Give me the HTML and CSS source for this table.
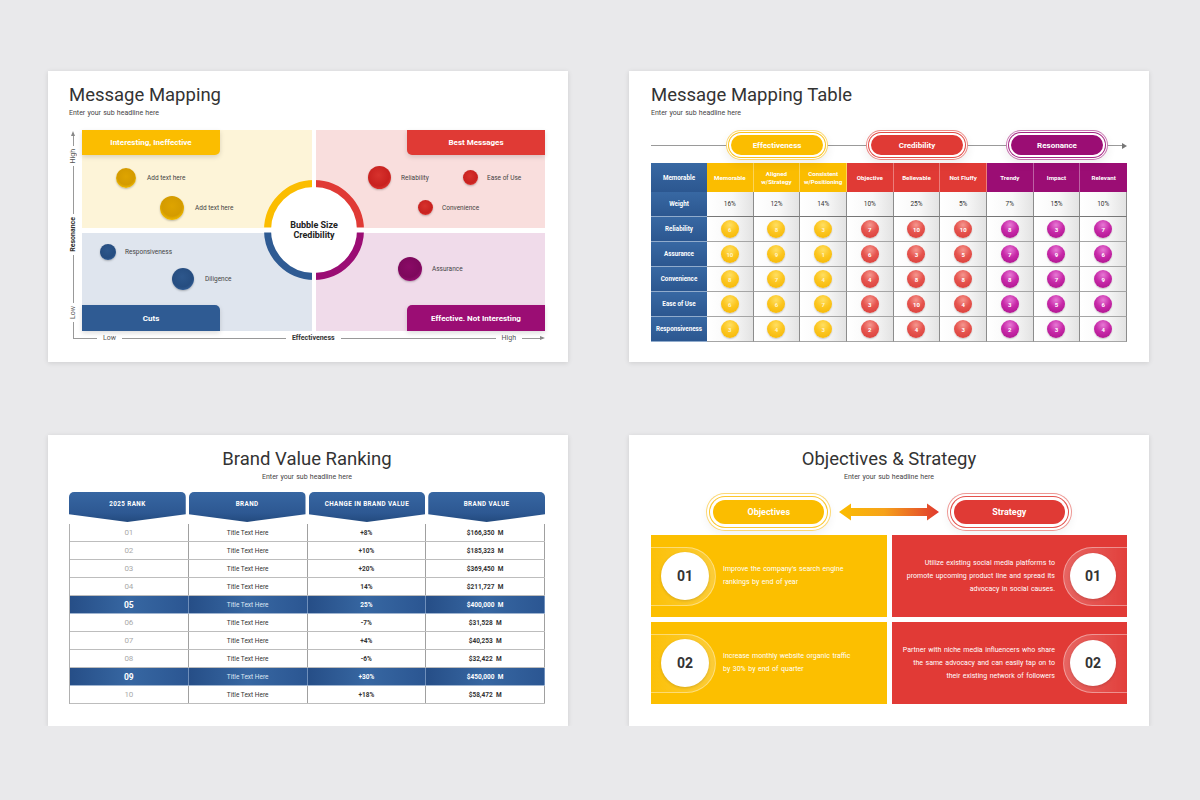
FILE: index.html
```html
<!DOCTYPE html>
<html lang="en">
<head>
<meta charset="utf-8">
<title>Message Mapping Slides</title>
<link rel="stylesheet" href="styles.css">
</head>
<body>
<div class="board">

  <!-- Slide 1 -->
  <section class="slide s-map">
    <h1 class="title">Message Mapping</h1>
    <p class="sub">Enter your sub headline here</p>
    <div class="map">
      <div class="vaxis">
        <span class="arrow-up"></span>
        <span class="vline v1"></span>
        <span class="vlabel">High</span>
        <span class="vline grow"></span>
        <span class="vlabel strong">Resonance</span>
        <span class="vline grow"></span>
        <span class="vlabel">Low</span>
        <span class="vline v2"></span>
      </div>
      <div class="quads">
        <div class="quad q-tl">
          <div class="tab">Interesting, Ineffective</div>
          <div class="node n-tl1"><i class="bub b-yellow d20"></i><span class="g11">Add text here</span></div>
          <div class="node n-tl2"><i class="bub b-yellow d24"></i><span class="g11">Add text here</span></div>
        </div>
        <div class="quad q-tr">
          <div class="tab">Best Messages</div>
          <div class="node n-tr1"><i class="bub b-red d23"></i><span class="g10">Reliability</span></div>
          <div class="node n-tr2"><i class="bub b-red d15"></i><span class="g9">Ease of Use</span></div>
          <div class="node n-tr3"><i class="bub b-red d15"></i><span class="g9">Convenience</span></div>
        </div>
        <div class="quad q-bl">
          <div class="node n-bl1"><i class="bub b-blue d16"></i><span class="g9">Responsiveness</span></div>
          <div class="node n-bl2"><i class="bub b-blue d22"></i><span class="g11">Diligence</span></div>
          <div class="tab">Cuts</div>
        </div>
        <div class="quad q-br">
          <div class="node n-br1"><i class="bub b-purple d24"></i><span class="g10">Assurance</span></div>
          <div class="tab">Effective. Not Interesting</div>
        </div>
        <div class="hub">
          <svg class="hub-ring" width="100" height="100" viewBox="0 0 100 100">
            <circle cx="50" cy="50" r="46.5" fill="#fff"/>
            <path d="M3.5 50 A46.5 46.5 0 0 1 50 3.5" fill="none" stroke="#fbbd00" stroke-width="7"/>
            <path d="M50 3.5 A46.5 46.5 0 0 1 96.5 50" fill="none" stroke="#e03a35" stroke-width="7"/>
            <path d="M96.5 50 A46.5 46.5 0 0 1 50 96.5" fill="none" stroke="#9b0d74" stroke-width="7"/>
            <path d="M50 96.5 A46.5 46.5 0 0 1 3.5 50" fill="none" stroke="#2f5b93" stroke-width="7"/>
            <rect x="48" y="0" width="4" height="100" fill="#fff"/>
            <rect x="0" y="47.5" width="100" height="5" fill="#fff"/>
          </svg>
          <span class="hub-text">Bubble Size<br>Credibility</span>
        </div>
      </div>
      <div class="haxis">
        <span class="hline h1"></span>
        <span class="hlabel">Low</span>
        <span class="hline hg1"></span>
        <span class="hlabel strong">Effectiveness</span>
        <span class="hline hg2"></span>
        <span class="hlabel">High</span>
        <span class="hline h2"></span>
        <span class="arrow-right"></span>
      </div>
    </div>
  </section>

  <!-- Slide 2 -->
  <section class="slide s-table">
    <h1 class="title">Message Mapping Table</h1>
    <p class="sub">Enter your sub headline here</p>
    <div class="pillrow">
      <span class="pill pill-y">Effectiveness</span>
      <span class="pill pill-r">Credibility</span>
      <span class="pill pill-p">Resonance</span>
    </div>
    <div class="mtable">
      <div class="rl hrow">Memorable</div>
      <div class="h hy">Memorable</div>
      <div class="h hy">Aligned<br>w/Strategy</div>
      <div class="h hy">Consistent<br>w/Positioning</div>
      <div class="h hr">Objective</div>
      <div class="h hr">Believable</div>
      <div class="h hr">Not Fluffy</div>
      <div class="h hp">Trendy</div>
      <div class="h hp">Impact</div>
      <div class="h hp last">Relevant</div>

      <div class="rl">Weight</div>
      <div class="c w">16%</div><div class="c w">12%</div><div class="c w">14%</div>
      <div class="c w">10%</div><div class="c w">25%</div><div class="c w">5%</div>
      <div class="c w">7%</div><div class="c w">15%</div><div class="c w">10%</div>

      <div class="rl">Reliability</div>
      <div class="c"><span class="dot dy">6</span></div><div class="c"><span class="dot dy">8</span></div><div class="c"><span class="dot dy">3</span></div>
      <div class="c"><span class="dot dr">7</span></div><div class="c"><span class="dot dr">10</span></div><div class="c"><span class="dot dr">10</span></div>
      <div class="c"><span class="dot dp">8</span></div><div class="c"><span class="dot dp">3</span></div><div class="c"><span class="dot dp">7</span></div>

      <div class="rl">Assurance</div>
      <div class="c"><span class="dot dy">10</span></div><div class="c"><span class="dot dy">9</span></div><div class="c"><span class="dot dy">1</span></div>
      <div class="c"><span class="dot dr">6</span></div><div class="c"><span class="dot dr">3</span></div><div class="c"><span class="dot dr">5</span></div>
      <div class="c"><span class="dot dp">7</span></div><div class="c"><span class="dot dp">9</span></div><div class="c"><span class="dot dp">6</span></div>

      <div class="rl">Convenience</div>
      <div class="c"><span class="dot dy">8</span></div><div class="c"><span class="dot dy">7</span></div><div class="c"><span class="dot dy">4</span></div>
      <div class="c"><span class="dot dr">4</span></div><div class="c"><span class="dot dr">8</span></div><div class="c"><span class="dot dr">8</span></div>
      <div class="c"><span class="dot dp">8</span></div><div class="c"><span class="dot dp">7</span></div><div class="c"><span class="dot dp">9</span></div>

      <div class="rl">Ease of Use</div>
      <div class="c"><span class="dot dy">6</span></div><div class="c"><span class="dot dy">6</span></div><div class="c"><span class="dot dy">7</span></div>
      <div class="c"><span class="dot dr">3</span></div><div class="c"><span class="dot dr">10</span></div><div class="c"><span class="dot dr">4</span></div>
      <div class="c"><span class="dot dp">3</span></div><div class="c"><span class="dot dp">5</span></div><div class="c"><span class="dot dp">6</span></div>

      <div class="rl">Responsiveness</div>
      <div class="c"><span class="dot dy">3</span></div><div class="c"><span class="dot dy">4</span></div><div class="c"><span class="dot dy">3</span></div>
      <div class="c"><span class="dot dr">2</span></div><div class="c"><span class="dot dr">4</span></div><div class="c"><span class="dot dr">3</span></div>
      <div class="c"><span class="dot dp">2</span></div><div class="c"><span class="dot dp">3</span></div><div class="c"><span class="dot dp">4</span></div>
    </div>
  </section>

  <!-- Slide 3 -->
  <section class="slide s-rank">
    <h1 class="title center">Brand Value Ranking</h1>
    <p class="sub center">Enter your sub headline here</p>
    <div class="rtabs">
      <div class="rtab">2025 RANK</div>
      <div class="rtab">BRAND</div>
      <div class="rtab">CHANGE IN BRAND VALUE</div>
      <div class="rtab">BRAND VALUE</div>
    </div>
    <div class="rtable">
      <div class="rrow"><span class="rk">01</span><span class="bt">Title Text Here</span><span class="bv">+8%</span><span class="bv">$166,350&nbsp; M</span></div>
      <div class="rrow"><span class="rk">02</span><span class="bt">Title Text Here</span><span class="bv">+10%</span><span class="bv">$185,323&nbsp; M</span></div>
      <div class="rrow"><span class="rk">03</span><span class="bt">Title Text Here</span><span class="bv">+20%</span><span class="bv">$369,450&nbsp; M</span></div>
      <div class="rrow"><span class="rk">04</span><span class="bt">Title Text Here</span><span class="bv">14%</span><span class="bv">$211,727&nbsp; M</span></div>
      <div class="rrow hl"><span class="rk">05</span><span class="bt">Title Text Here</span><span class="bv">25%</span><span class="bv">$400,000&nbsp; M</span></div>
      <div class="rrow"><span class="rk">06</span><span class="bt">Title Text Here</span><span class="bv">-7%</span><span class="bv">$31,528&nbsp; M</span></div>
      <div class="rrow"><span class="rk">07</span><span class="bt">Title Text Here</span><span class="bv">+4%</span><span class="bv">$40,253&nbsp; M</span></div>
      <div class="rrow"><span class="rk">08</span><span class="bt">Title Text Here</span><span class="bv">-6%</span><span class="bv">$32,422&nbsp; M</span></div>
      <div class="rrow hl"><span class="rk">09</span><span class="bt">Title Text Here</span><span class="bv">+30%</span><span class="bv">$450,000&nbsp; M</span></div>
      <div class="rrow"><span class="rk">10</span><span class="bt">Title Text Here</span><span class="bv">+18%</span><span class="bv">$58,472&nbsp; M</span></div>
    </div>
  </section>

  <!-- Slide 4 -->
  <section class="slide s-obj">
    <h1 class="title center">Objectives &amp; Strategy</h1>
    <p class="sub center">Enter your sub headline here</p>
    <div class="opills">
      <span class="opill op-y">Objectives</span>
      <svg class="darrow" width="100" height="20" viewBox="0 0 100 20">
        <defs>
          <linearGradient id="ag" x1="0" y1="0" x2="1" y2="0">
            <stop offset="0" stop-color="#fbbd00"/>
            <stop offset="0.45" stop-color="#f6a21a"/>
            <stop offset="1" stop-color="#e0392f"/>
          </linearGradient>
        </defs>
        <polygon points="0,10 12,1.5 12,6 88,6 88,1.5 100,10 88,18.5 88,14 12,14 12,18.5" fill="url(#ag)"/>
      </svg>
      <span class="opill op-r">Strategy</span>
    </div>
    <div class="cards">
      <div class="card card-y">
        <div class="band"><span class="num">01</span></div>
        <p class="ctext">Improve the company's search engine<br>rankings by end of year</p>
      </div>
      <div class="card card-r">
        <div class="band"><span class="num">01</span></div>
        <p class="ctext">Utilize existing social media platforms to<br>promote upcoming product line and spread its<br>advocacy in social causes.</p>
      </div>
      <div class="card card-y">
        <div class="band"><span class="num">02</span></div>
        <p class="ctext">Increase monthly website organic traffic<br>by 30% by end of quarter</p>
      </div>
      <div class="card card-r">
        <div class="band"><span class="num">02</span></div>
        <p class="ctext">Partner with niche media influencers who share<br>the same advocacy and can easily tap on to<br>their existing network of followers</p>
      </div>
    </div>
  </section>

</div>
</body>
</html>
```

FILE: styles.css
```css
* { box-sizing: border-box; }

body {
  margin: 0;
  background: #e9e9eb;
  font-family: Roboto, "Liberation Sans", Arial, sans-serif;
  color: #333;
}

.board {
  display: grid;
  grid-template-columns: 520px 520px;
  grid-template-rows: 291px 291px;
  column-gap: 61px;
  row-gap: 73px;
  padding: 71px 0 0 48px;
}

.slide {
  background: #fff;
  box-shadow: 0 1px 5px rgba(0, 0, 0, 0.12);
  padding: 13px 22px 0 22px;
  overflow: hidden;
}

.title {
  margin: 0;
  font-size: 18.5px;
  font-weight: 400;
  line-height: 22px;
  color: #333;
}

.sub {
  margin: 2px 0 0;
  font-size: 7px;
  line-height: 10px;
  color: #444;
  word-spacing: 0.5px;
}

.center { text-align: center; }

/* ---------- Slide 1 ---------- */
.s-map { padding: 13px 23px 0 21px; }

.map {
  margin: 12px 0 0 -1px;
  display: grid;
  grid-template-columns: 10px 463px;
  grid-template-rows: 201px 14px;
  column-gap: 4px;
}

.vaxis {
  grid-column: 1;
  grid-row: 1 / 3;
  margin: 1px 0 7px;
  display: flex;
  flex-direction: column;
  align-items: center;
}

.arrow-up {
  width: 0;
  height: 0;
  border-left: 2.5px solid transparent;
  border-right: 2.5px solid transparent;
  border-bottom: 5px solid #888;
  flex: none;
}

.vline { width: 1px; background: #999; flex: none; }
.vline.v1 { height: 10px; }
.vline.v2 { height: 16px; }
.vline.grow { flex: 1 1 0; }

.vlabel {
  writing-mode: vertical-rl;
  transform: rotate(180deg);
  font-size: 7px;
  line-height: 10px;
  color: #555;
  padding: 3px 0;
  flex: none;
}

.strong { font-weight: 700; color: #333; }

.haxis {
  grid-column: 1 / 3;
  grid-row: 2;
  margin-left: 5px;
  display: flex;
  align-items: center;
}

.hline { height: 1px; background: #999; flex: none; }
.hline.h1 { width: 24px; }
.hline.h2 { width: 18px; }
.hline.hg1 { flex: 164 1 0; }
.hline.hg2 { flex: 155 1 0; }

.hlabel {
  font-size: 7px;
  line-height: 10px;
  color: #555;
  padding: 0 6px;
  flex: none;
}
.hlabel.strong { color: #333; }

.arrow-right {
  width: 0;
  height: 0;
  border-top: 2.5px solid transparent;
  border-bottom: 2.5px solid transparent;
  border-left: 5px solid #888;
  flex: none;
}

.quads {
  grid-column: 2;
  grid-row: 1;
  position: relative;
  display: grid;
  grid-template-columns: 230px 229px;
  grid-template-rows: 98px 98px;
  gap: 5px 4px;
}

.quad {
  position: relative;
  display: flex;
  flex-direction: column;
}
.q-tl { background: #fdf4d8; align-items: flex-start; }
.q-tr { background: #f9dedd; align-items: flex-end; }
.q-bl { background: #dfe5ee; align-items: flex-start; justify-content: flex-end; }
.q-br { background: #f0dbea; align-items: flex-end; justify-content: flex-end; }

.tab {
  width: 138px;
  height: 25px;
  display: flex;
  align-items: center;
  justify-content: center;
  color: #fff;
  font-weight: 700;
  font-size: 8px;
  box-shadow: 0 2px 5px rgba(0, 0, 0, 0.14);
}
.q-tl .tab { background: #fbbd00; border-radius: 0 0 5px 0; }
.q-tr .tab { background: #e03a35; border-radius: 0 0 0 5px; }
.q-bl .tab { background: #2f5b93; border-radius: 0 5px 0 0; height: 26px; }
.q-br .tab { background: #9b0d74; border-radius: 5px 0 0 0; height: 26px; }

.node {
  position: absolute;
  display: flex;
  align-items: center;
  font-size: 6.5px;
  color: #444;
  white-space: nowrap;
}

.bub {
  flex: none;
  border-radius: 50%;
  box-shadow: 0 1px 2px rgba(0, 0, 0, 0.25);
}
.d15 { width: 15px; height: 15px; }
.d16 { width: 16px; height: 16px; }
.d20 { width: 20px; height: 20px; }
.d22 { width: 22px; height: 22px; }
.d23 { width: 23px; height: 23px; }
.d24 { width: 24px; height: 24px; }

.g9 { margin-left: 9px; }
.g10 { margin-left: 10px; }
.g11 { margin-left: 11px; }

.b-yellow { background: radial-gradient(circle at 50% 42%, #dea400 0%, #d49b00 55%, #f2bd00 78%, #f7c81e 100%); }
.b-red { background: radial-gradient(circle at 46% 40%, #d7322d 0%, #c8211f 58%, #df3b36 82%, #e4504a 100%); }
.b-blue { background: radial-gradient(circle at 46% 40%, #2d578c 0%, #264d80 58%, #35619a 82%, #3f6ba4 100%); }
.b-purple { background: radial-gradient(circle at 46% 40%, #8a0a66 0%, #7d085c 55%, #9b1176 82%, #a81a82 100%); }

.n-tl1 { left: 34px; top: 38px; }
.n-tl2 { left: 78px; top: 66px; }
.n-tr1 { left: 52px; top: 36px; }
.n-tr2 { left: 147px; top: 40px; }
.n-tr3 { left: 102px; top: 70px; }
.n-bl1 { left: 18px; top: 11px; }
.n-bl2 { left: 90px; top: 35px; }
.n-br1 { left: 82px; top: 24px; }

.hub {
  position: absolute;
  left: 182px;
  top: 50px;
  width: 100px;
  height: 100px;
  display: flex;
  align-items: center;
  justify-content: center;
}
.hub-ring { position: absolute; left: 0; top: 0; }
.hub-text {
  position: relative;
  font-size: 9px;
  line-height: 10.5px;
  font-weight: 700;
  color: #222;
  text-align: center;
}

/* ---------- Slide 2 ---------- */
.pillrow {
  position: relative;
  margin-top: 12px;
  height: 30px;
  display: grid;
  grid-template-columns: 56px repeat(3, 1fr);
  align-items: center;
  justify-items: center;
}
.pillrow::before {
  content: "";
  position: absolute;
  left: 0;
  right: 3px;
  top: 15px;
  height: 1px;
  background: #9a9a9a;
}
.pillrow::after {
  content: "";
  position: absolute;
  right: 0;
  top: 12.5px;
  border-top: 3px solid transparent;
  border-bottom: 3px solid transparent;
  border-left: 5px solid #777;
}

.pill {
  position: relative;
  z-index: 1;
  width: 92px;
  height: 20px;
  border-radius: 10px;
  display: flex;
  align-items: center;
  justify-content: center;
  color: #fff;
  font-weight: 700;
  font-size: 8px;
}
.pill-y {
  grid-column: 2;
  background: #fbbd00;
  box-shadow: 0 0 0 2px #fff, 0 0 0 3px #fbc21a, 0 0 0 4px #fff, 0 0 0 5px #fcd56a, 0 4px 10px 5px rgba(0, 0, 0, 0.07);
}
.pill-r {
  grid-column: 3;
  background: #e03a35;
  box-shadow: 0 0 0 2px #fff, 0 0 0 3px #e24a45, 0 0 0 4px #fff, 0 0 0 5px #ec8a86, 0 4px 10px 5px rgba(0, 0, 0, 0.07);
}
.pill-p {
  grid-column: 4;
  background: #9b0d74;
  box-shadow: 0 0 0 2px #fff, 0 0 0 3px #a52583, 0 0 0 4px #fff, 0 0 0 5px #c877b1, 0 4px 10px 5px rgba(0, 0, 0, 0.07);
}

.mtable {
  margin-top: 3px;
  display: grid;
  grid-template-columns: 56px repeat(9, 1fr);
  grid-template-rows: 29px 25px repeat(5, 25px);
}

.rl {
  display: flex;
  align-items: center;
  justify-content: center;
  color: #fff;
  font-weight: 700;
  font-size: 6.3px;
  background: linear-gradient(180deg, #3868a3 0%, #2c5790 100%);
  border-bottom: 1px solid rgba(255, 255, 255, 0.45);
  white-space: nowrap;
}
.rl.hrow { border-bottom: none; }

.h {
  display: flex;
  align-items: center;
  justify-content: center;
  text-align: center;
  color: #fff;
  font-weight: 700;
  font-size: 6.2px;
  line-height: 8px;
  border-right: 1px solid rgba(255, 255, 255, 0.35);
}
.h.last { border-right: none; }
.hy { background: #fbbd00; }
.hr { background: #e03a35; }
.hp { background: #9b0d74; }

.c {
  display: flex;
  align-items: center;
  justify-content: center;
  background: linear-gradient(90deg, #ffffff 0%, #f8f8f8 55%, #e3e3e3 100%);
  border-right: 1px solid #8c8c8c;
  border-bottom: 1px solid #a5a5a5;
}
.c.w {
  font-size: 6.5px;
  color: #333;
  border-bottom-color: #777;
}

.dot {
  width: 18px;
  height: 18px;
  border-radius: 50%;
  display: flex;
  align-items: center;
  justify-content: center;
  color: #fff;
  font-weight: 700;
  font-size: 6px;
  box-shadow: 0 1px 1.5px rgba(0, 0, 0, 0.2);
}
.dy { background: radial-gradient(circle at 50% 28%, #ffdf63 0%, #fcc620 45%, #f4b400 100%); color: #fff3c8; }
.dr { background: radial-gradient(circle at 50% 28%, #f59890 0%, #e6554f 45%, #d73b37 100%); }
.dp { background: radial-gradient(circle at 50% 28%, #e77ad5 0%, #c82aa9 45%, #a80f88 100%); }

/* ---------- Slide 3 ---------- */
.s-rank { padding: 13px 23px 0 21px; }

.rtabs {
  margin-top: 10px;
  display: grid;
  grid-template-columns: repeat(4, 1fr);
  column-gap: 3px;
}
.rtab {
  height: 30px;
  padding-bottom: 6px;
  display: flex;
  align-items: center;
  justify-content: center;
  color: #fff;
  font-weight: 700;
  font-size: 6.3px;
  letter-spacing: 0.4px;
  background: linear-gradient(180deg, #3766a2 0%, #2d5892 70%, #234a7e 100%);
  border-radius: 5px;
  clip-path: polygon(0 0, 100% 0, 100% 74%, 50% 100%, 0 74%);
}

.rtable {
  margin-top: 2px;
  border-left: 1px solid #b0b0b0;
}
.rrow {
  display: grid;
  grid-template-columns: repeat(4, 1fr);
  height: 18px;
  border-bottom: 1px solid #bdbdbd;
}
.rrow > span {
  display: flex;
  align-items: center;
  justify-content: center;
  border-right: 1px solid #a0a0a0;
  font-size: 6.5px;
  color: #333;
}
.rrow .rk { font-size: 8px; color: #aaa; }
.rrow .bv { font-weight: 700; color: #333; }
.rrow.hl { border-bottom-color: #9fb4d0; }
.rrow.hl > span {
  background: linear-gradient(90deg, #264e87 0%, #3767a2 50%, #2b5692 100%);
  color: #fff;
  border-right-color: #6f8fbb;
}
.rrow.hl .rk { color: #fff; font-weight: 700; font-size: 8.5px; }
.rrow.hl .bt { color: #dfe7f3; }

/* ---------- Slide 4 ---------- */
.opills {
  margin-top: 11px;
  height: 37px;
  display: grid;
  grid-template-columns: 1fr 1fr;
  column-gap: 5px;
  align-items: center;
  justify-items: center;
}
.opill {
  grid-row: 1;
  width: 111px;
  height: 24px;
  border-radius: 12px;
  display: flex;
  align-items: center;
  justify-content: center;
  color: #fff;
  font-weight: 700;
  font-size: 9px;
}
.op-y {
  grid-column: 1;
  background: #fbbd00;
  box-shadow: 0 0 0 3px #fff, 0 0 0 4px #fbc72e, 0 0 0 6px #fff, 0 0 0 7px #fcd873, 0 4px 10px 6px rgba(0, 0, 0, 0.06);
}
.op-r {
  grid-column: 2;
  background: #e03a35;
  box-shadow: 0 0 0 3px #fff, 0 0 0 4px #e4524d, 0 0 0 6px #fff, 0 0 0 7px #ee9793, 0 4px 10px 6px rgba(0, 0, 0, 0.06);
}
.darrow {
  grid-column: 1 / 3;
  grid-row: 1;
  justify-self: center;
}

.cards {
  margin-top: 5px;
  display: grid;
  grid-template-columns: 236px 235px;
  grid-template-rows: 82px 82px;
  gap: 5px;
}
.card {
  display: flex;
  align-items: center;
}
.card-y { background: #fcbf00; }
.card-r { background: #e13a36; flex-direction: row-reverse; text-align: right; }

.band {
  flex: none;
  width: 65px;
  height: 59px;
  display: flex;
  align-items: center;
  padding-left: 10px;
  border-radius: 0 30px 30px 0;
  border: 1px solid rgba(255, 255, 255, 0.4);
  border-left: none;
  background: linear-gradient(90deg, rgba(255, 255, 255, 0.03), rgba(255, 255, 255, 0.22));
}
.card-r .band {
  width: 64px;
  padding-left: 0;
  padding-right: 11px;
  justify-content: flex-end;
  border-radius: 30px 0 0 30px;
  border: 1px solid rgba(255, 255, 255, 0.4);
  border-right: none;
  background: linear-gradient(270deg, rgba(255, 255, 255, 0.03), rgba(255, 255, 255, 0.22));
}
.num {
  width: 48px;
  height: 48px;
  border-radius: 50%;
  background: #fff;
  display: flex;
  align-items: center;
  justify-content: center;
  font-weight: 700;
  font-size: 14px;
  color: #333;
  box-shadow: 0 1px 3px rgba(0, 0, 0, 0.15);
}
.card-r .num { width: 46px; height: 46px; }

.ctext {
  margin: 0 0 0 7px;
  font-size: 7px;
  line-height: 13px;
  color: #fff;
  word-spacing: 0.8px;
}
.card-r .ctext { margin: 0 8px 0 0; }
```
